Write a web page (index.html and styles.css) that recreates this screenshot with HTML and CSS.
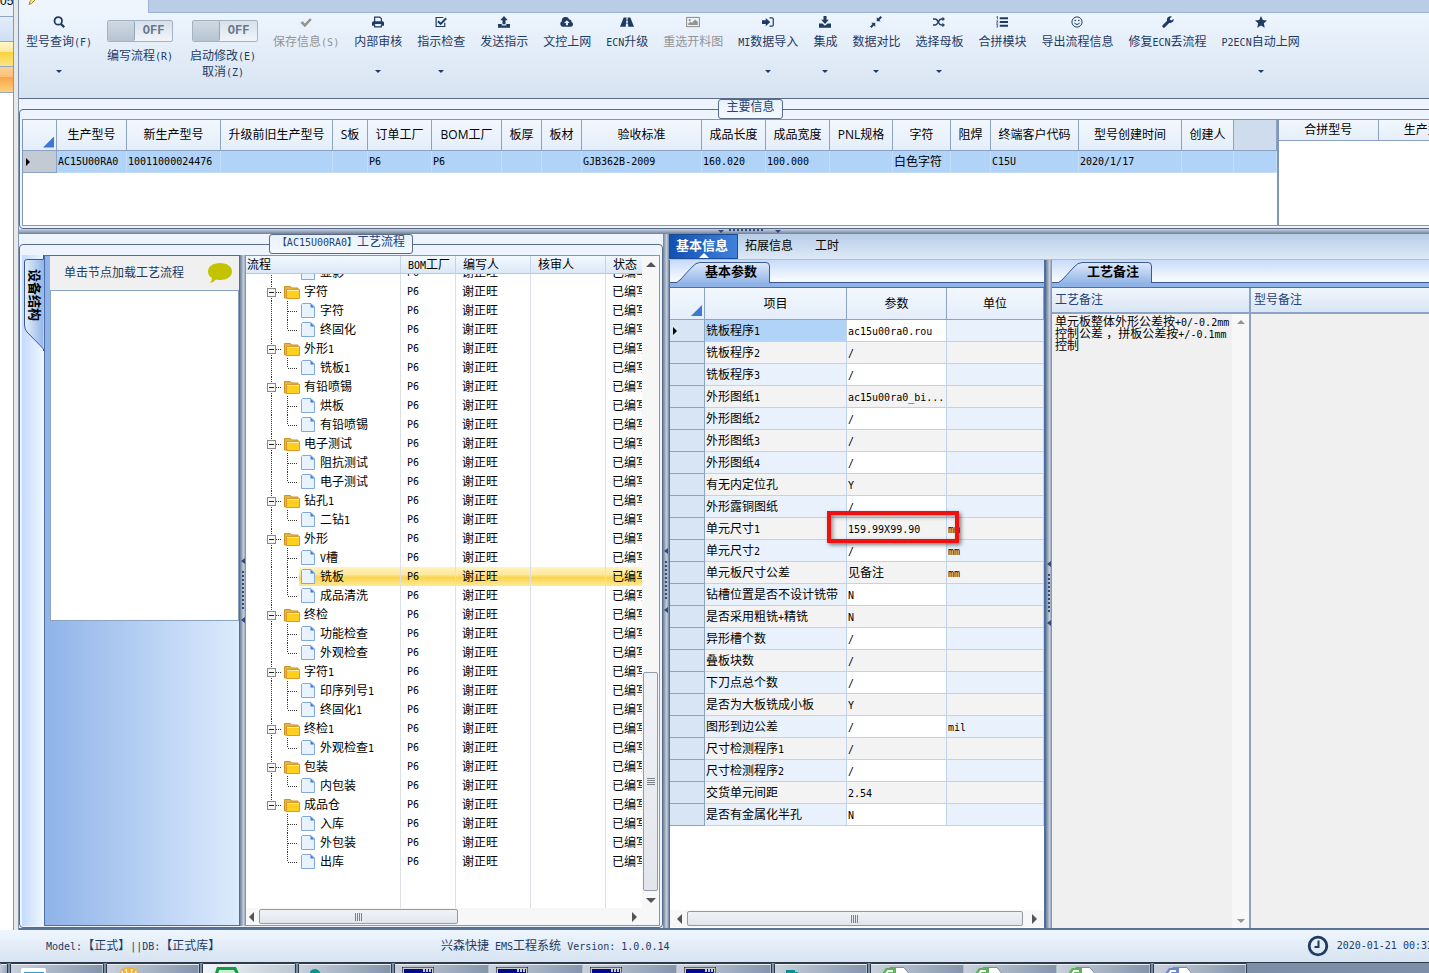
FILE: index.html
```html
<!DOCTYPE html>
<html lang="zh-CN">
<head>
    <meta charset="UTF-8">
    <meta name="viewport" content="width=device-width, initial-scale=1.0">
    <link rel="stylesheet" href="styles.css">
    <title>EMS工程系统</title>
</head>
<body>

<div class="workspace">
    <div class="side-strip">
        <div class="side-top">05</div>
        <div class="side-head"></div>
        <div class="side-yellow"></div>
        <div class="side-orange"></div>
        <div class="side-body"></div>
    </div>
    <div class="side-splitter"></div>

    <div class="app">
        <div class="doc-tabs">
            <div class="doc-tab">
                <svg width="8" height="5" viewBox="0 0 8 5"><path d="M1 4.500L2 1.500L4 -1L7 0L3.500 3.500Z" fill="#ffe680" stroke="#a8812c" stroke-width="1"/></svg>
            </div>
        </div>

        <div class="ribbon">
            <button class="tool has-menu">
                <svg viewBox="0 0 16 16"><circle cx="7" cy="6.500" r="5" fill="none" stroke="currentColor" stroke-width="2.400"/><path d="M10.500 10.500L15 15" stroke="currentColor" stroke-width="3"/></svg>
                <span>型号查询<span class="en">(F)</span></span>
            </button>
            <div class="toggle">
                <label class="switch"><input type="checkbox" id="editFlow"><span>OFF</span></label>
                <label for="editFlow">编写流程<span class="en">(R)</span></label>
            </div>
            <div class="toggle wide">
                <label class="switch"><input type="checkbox" id="startEdit"><span>OFF</span></label>
                <label for="startEdit">启动修改<span class="en">(E)</span></label>
                <button>取消<span class="en">(Z)</span></button>
            </div>
            <button class="tool" disabled>
                <svg viewBox="0 0 16 16"><path d="M2 8L6.500 12.500L14.500 4" fill="none" stroke="currentColor" stroke-width="3.400"/></svg>
                <span>保存信息<span class="en">(S)</span></span>
            </button>
            <button class="tool has-menu">
                <svg viewBox="0 0 16 16"><path d="M3.500 8V1.500H10.500L12.500 3.500V8" fill="none" stroke="currentColor" stroke-width="1.600"/><path d="M0 9Q0 7 2 7H14Q16 7 16 9V13H13V10.500H3V13H0Z" fill="currentColor"/><path d="M3.500 11V14.500H12.500V11" fill="none" stroke="currentColor" stroke-width="1.600"/></svg>
                <span>内部审核</span>
            </button>
            <button class="tool has-menu">
                <svg viewBox="0 0 16 16"><path d="M13 9V14H1.500V2H11" fill="none" stroke="currentColor" stroke-width="1.600"/><path d="M4 7L7.500 10.500L15 3" fill="none" stroke="currentColor" stroke-width="2.600"/></svg>
                <span>指示检查</span>
            </button>
            <button class="tool">
                <svg viewBox="0 0 16 16"><path d="M8 0L13 5.500H10V11H6V5.500H3ZM0 10.500H5V12.500H11V10.500H16V15.500H0Z" fill="currentColor"/></svg>
                <span>发送指示</span>
            </button>
            <button class="tool">
                <svg class="wide-icon" viewBox="0 0 19 16"><path d="M4 14.500A4 4 0 0 1 2.500 7A5.200 5.200 0 0 1 12.500 4.500A3 3 0 0 1 15.500 8A3.400 3.400 0 0 1 15 14.500ZM9.300 5.500L5.500 9.300H8V12.500H10.800V9.300H13.200Z" fill="currentColor" fill-rule="evenodd"/></svg>
                <span>文控上网</span>
            </button>
            <button class="tool">
                <svg class="wide-icon" viewBox="0 0 19 16"><path d="M5 2H8.800L8.500 5H10.500L10.200 2H14L19 14.500H11.200L10.900 10H8.100L7.800 14.500H0ZM8.500 6L8.200 9H10.800L10.500 6Z" fill="currentColor" fill-rule="evenodd"/></svg>
                <span><span class="en">ECN</span>升级</span>
            </button>
            <button class="tool" disabled>
                <svg class="wide-icon" viewBox="0 0 19 16"><rect x="0.800" y="1.800" width="17.400" height="12.400" fill="none" stroke="currentColor" stroke-width="1.500"/><circle cx="5" cy="5.500" r="1.500" fill="currentColor"/><path d="M3 12V10L6 7.500L8 9L12.500 4.500L16 8V12Z" fill="currentColor"/></svg>
                <span>重选开料图</span>
            </button>
            <button class="tool has-menu">
                <svg viewBox="0 0 16 16"><path d="M0 5.500H5V2.500L11 8L5 13.500V10.500H0Z" fill="currentColor"/><path d="M10 2.500H13.500Q15 2.500 15 4V12Q15 13.500 13.500 13.500H10" fill="none" stroke="currentColor" stroke-width="1.600"/></svg>
                <span><span class="en">MI</span>数据导入</span>
            </button>
            <button class="tool has-menu">
                <svg viewBox="0 0 16 16"><path d="M6 0H10V5H13L8 10.500L3 5H6ZM0 10H4.500L8 13L11.500 10H16V15.500H0Z" fill="currentColor"/></svg>
                <span>集成</span>
            </button>
            <button class="tool has-menu">
                <svg viewBox="0 0 16 16"><path d="M9 1.500V7H14.500L12.500 5.300L16 2L14 0L10.800 3.400ZM7 14.500V9H1.500L3.500 10.700L0 14L2 16L5.200 12.600Z" fill="currentColor"/></svg>
                <span>数据对比</span>
            </button>
            <button class="tool has-menu">
                <svg viewBox="0 0 16 16"><path d="M0 4H3C7 4 7 12 11 12H13M0 12H3C7 12 7 4 11 4H13" fill="none" stroke="currentColor" stroke-width="2"/><path d="M12.500 1L16 4L12.500 7ZM12.500 9L16 12L12.500 15Z" fill="currentColor"/></svg>
                <span>选择母板</span>
            </button>
            <button class="tool">
                <svg viewBox="0 0 16 16"><path d="M5 3H16M5 8H16M5 13H16" stroke="currentColor" stroke-width="2.400"/><path d="M0.500 1.500L2 0.500V4.500M0.500 6.500H2.500L0.700 9.500H3M0.500 11.500H2.500L1.500 13L2.500 14.500L0.500 15" fill="none" stroke="currentColor" stroke-width="1"/></svg>
                <span>合拼模块</span>
            </button>
            <button class="tool">
                <svg viewBox="0 0 16 16"><circle cx="8" cy="8" r="6.800" fill="none" stroke="currentColor" stroke-width="1.300"/><circle cx="5.600" cy="6" r="1.100" fill="currentColor"/><circle cx="10.400" cy="6" r="1.100" fill="currentColor"/><path d="M4.500 9.500Q8 13.500 11.500 9.500" fill="none" stroke="currentColor" stroke-width="1.300"/></svg>
                <span>导出流程信息</span>
            </button>
            <button class="tool">
                <svg viewBox="0 0 16 16"><path d="M2.500 13.500L9.500 6.500" stroke="currentColor" stroke-width="4" stroke-linecap="round"/><path d="M15.500 4L12.500 6L10.500 5V3L13.500 1A4.500 4.500 0 1 0 15.500 4Z" fill="currentColor"/></svg>
                <span>修复<span class="en">ECN</span>丢流程</span>
            </button>
            <button class="tool has-menu">
                <svg viewBox="0 0 16 16"><path d="M8 0L10.400 5.300L16 6L11.800 9.800L13 15.500L8 12.700L3 15.500L4.200 9.800L0 6L5.600 5.300Z" fill="currentColor"/></svg>
                <span><span class="en">P2ECN</span>自动上网</span>
            </button>
        </div>

        <fieldset class="group main-group">
            <legend>主要信息</legend>
            <div class="main-grids">
                <div class="main-left">
                    <table class="grid main-table">
                        <colgroup>
                            <col style="width: 34px"><col style="width: 70px"><col style="width: 94px"><col style="width: 112px"><col style="width: 35px"><col style="width: 64px"><col style="width: 70px"><col style="width: 40px"><col style="width: 40px"><col style="width: 120px"><col style="width: 64px"><col style="width: 64px"><col style="width: 63px"><col style="width: 58px"><col style="width: 40px"><col style="width: 88px"><col style="width: 103px"><col style="width: 52px"><col>
                        </colgroup>
                        <thead>
                            <tr>
                                <th class="corner"></th><th>生产型号</th><th>新生产型号</th><th>升级前旧生产型号</th><th>S板</th><th>订单工厂</th><th>BOM工厂</th><th>板厚</th><th>板材</th><th>验收标准</th><th>成品长度</th><th>成品宽度</th><th>PNL规格</th><th>字符</th><th>阻焊</th><th>终端客户代码</th><th>型号创建时间</th><th>创建人</th><th class="rest"></th>
                            </tr>
                        </thead>
                        <tbody>
                            <tr>
                                <td class="row-head current"></td><td class="en">AC15U00RA0</td><td class="en">10011000024476</td><td></td><td></td><td class="en">P6</td><td class="en">P6</td><td></td><td></td><td class="en">GJB362B-2009</td><td class="en">160.020</td><td class="en">100.000</td><td></td><td>白色字符</td><td></td><td class="en">C15U</td><td class="en">2020/1/17</td><td></td><td></td>
                            </tr>
                        </tbody>
                    </table>
                </div>
                <div class="main-right">
                    <table class="grid merge-table">
                        <thead><tr><th>合拼型号</th><th>生产型号</th></tr></thead>
                    </table>
                </div>
            </div>
        </fieldset>

        <div class="splitter-h">
            <svg width="60" height="5" viewBox="0 0 60 5"><path d="M0 1H6L3 4ZM57 1H63L60 4Z" fill="#2f4a7d"/><path d="M11 1H47" stroke="#2f4a7d" stroke-width="2" stroke-dasharray="2 2"/></svg>
        </div>

        <div class="lower">
            <fieldset class="group flow-group">
                <legend><span class="en">【AC15U00RA0】</span>工艺流程</legend>
                <div class="flow-area">
                    <div class="side-tabs">
                        <svg width="22" height="96" viewBox="0 0 22 96">
                            <defs><linearGradient id="tabFill"><stop offset="0" stop-color="#e6f0fd"/><stop offset="1" stop-color="#91b5e8"/></linearGradient></defs>
                            <path d="M22 4.500H5Q2.500 4.500 2.500 7V70Q2.500 74 5 77L21.500 94Z" fill="url(#tabFill)"/>
                            <path d="M21.500 0V4.500H5Q2.500 4.500 2.500 7V70Q2.500 74 5 77L21.500 94V96" fill="none" stroke="#3a5a94"/>
                        </svg>
                        <span>设备结构</span>
                    </div>
                    <div class="device-pane">
                        <div class="device-head">
                            <span>单击节点加载工艺流程</span>
                            <svg width="26" height="22" viewBox="0 0 26 22"><path d="M13 1C20 1 25 4.500 25 9.500S20 18 13 18Q11 18 9 17.500Q6 21 3 21Q5 18.500 5 16Q1 13.500 1 9.500C1 4.500 6 1 13 1Z" fill="#c3c300"/></svg>
                        </div>
                        <div class="device-tree"></div>
                    </div>
                    <div class="splitter-v">
                        <svg width="6" height="68" viewBox="0 0 6 68"><path d="M5 1V7L1 4ZM5 60V66L1 63Z" fill="#2f4a7d"/><path d="M3 14V52" stroke="#2f4a7d" stroke-width="2" stroke-dasharray="2 2"/></svg>
                    </div>
                    <div class="flow-list">
                        <div class="flow-columns">
                            <div class="flow-scroll">
                                <table class="flow-table flow-header">
                                    <colgroup><col style="width: 155px"><col style="width: 55px"><col style="width: 75px"><col style="width: 75px"><col></colgroup>
                                    <thead><tr><th>流程</th><th><span class="en">BOM</span>工厂</th><th>编写人</th><th>核审人</th><th>状态</th></tr></thead>
                                </table>
                                <div class="flow-body">
                                    <table class="flow-table">
                                        <colgroup><col style="width: 155px"><col style="width: 55px"><col style="width: 75px"><col style="width: 75px"><col></colgroup>
                                        <tbody id="flowRows"></tbody>
                                    </table>
                                </div>
                            </div>
                            <div class="scroll-v">
                                <span class="arrow up"></span>
                                <span class="thumb"></span>
                                <span class="arrow down"></span>
                            </div>
                        </div>
                        <div class="scroll-h">
                            <span class="arrow left"></span>
                            <span class="thumb"></span>
                            <span class="arrow right"></span>
                        </div>
                    </div>
                </div>
            </fieldset>

            <div class="splitter-v outer">
                <svg width="6" height="68" viewBox="0 0 6 68"><path d="M5 1V7L1 4ZM5 60V66L1 63Z" fill="#2f4a7d"/><path d="M3 14V52" stroke="#2f4a7d" stroke-width="2" stroke-dasharray="2 2"/></svg>
            </div>

            <div class="detail">
                <div class="detail-tabs">
                    <button class="active">基本信息</button>
                    <button>拓展信息</button>
                    <button>工时</button>
                </div>
                <div class="detail-body">
                    <div class="params">
                        <div class="page-tabs">
                            <svg width="104" height="21" viewBox="0 0 104 21">
                                <defs><linearGradient id="pageFill" x2="0" y2="1"><stop offset="0" stop-color="#dfeafa"/><stop offset="1" stop-color="#8fb3e6"/></linearGradient></defs>
                                <path d="M0 22Q5 21 8 18L20 5Q24 0.500 28 0.500H94Q97.500 0.500 97.500 4V22Z" fill="url(#pageFill)" stroke="#3a5a94"/>
                            </svg>
                            <span>基本参数</span>
                        </div>
                        <div class="params-scroll">
                            <table class="grid params-table">
                                <colgroup><col style="width: 35px"><col style="width: 142px"><col style="width: 100px"><col></colgroup>
                                <thead><tr><th class="corner"></th><th>项目</th><th>参数</th><th>单位</th></tr></thead>
                                <tbody id="paramRows"></tbody>
                            </table>
                        </div>
                        <div class="scroll-h">
                            <span class="arrow left"></span>
                            <span class="thumb"></span>
                            <span class="arrow right"></span>
                        </div>
                    </div>
                    <div class="splitter-v inner">
                        <svg width="6" height="68" viewBox="0 0 6 68"><path d="M5 1V7L1 4ZM5 60V66L1 63Z" fill="#2f4a7d"/><path d="M3 14V52" stroke="#2f4a7d" stroke-width="2" stroke-dasharray="2 2"/></svg>
                    </div>
                    <div class="remarks">
                        <div class="page-tabs">
                            <svg width="104" height="21" viewBox="0 0 104 21">
                                <path d="M0 22Q5 21 8 18L20 5Q24 0.500 28 0.500H94Q97.500 0.500 97.500 4V22Z" fill="url(#pageFill)" stroke="#3a5a94"/>
                            </svg>
                            <span>工艺备注</span>
                        </div>
                        <div class="remark-cols">
                            <div class="remark first">
                                <label for="processRemark">工艺备注</label>
                                <div class="remark-text">
                                    <div class="remark-input" id="processRemark" role="textbox" contenteditable="true">单元板整体外形公差按<span class="en">+0/-0.2mm</span><br>控制公差 ，拼板公差按<span class="en">+/-0.1mm</span><br>控制</div>
                                    <div class="scroll-v faint">
                                        <span class="arrow up"></span>
                                        <span class="arrow down"></span>
                                    </div>
                                </div>
                            </div>
                            <div class="remark">
                                <label for="modelRemark">型号备注</label>
                                <textarea id="modelRemark"></textarea>
                            </div>
                        </div>
                    </div>
                </div>
            </div>
        </div>
    </div>
</div>

<div class="status">
    <span class="status-model"><span class="en">Model:</span>【正式】<span class="en">||DB:</span>【正式库】</span>
    <span class="status-version">兴森快捷<span class="en"> EMS</span>工程系统<span class="en"> Version: 1.0.0.14</span></span>
    <span class="status-time">
        <svg width="22" height="22" viewBox="0 0 22 22"><circle cx="11" cy="11" r="8.800" fill="none" stroke="#1f3a63" stroke-width="2.800"/><path d="M11.500 5.500V12H7.500" fill="none" stroke="#1f3a63" stroke-width="2"/></svg>
        <span class="en">2020-01-21 00:33</span>
    </span>
</div>

<div class="taskbar">
    <div class="task-group edge"><button></button></div>
    <div class="task-group"><button><svg width="26" height="8" viewBox="0 0 26 8"><path d="M0 8V3Q0 1 2 1H23Q25 1 25 3V8Z" fill="#fff"/><path d="M3 5H23V8H3Z" fill="#2b9ad6"/></svg></button></div>
    <div class="task-group"><button><svg width="26" height="8" viewBox="0 0 26 8"><path d="M2 8A10 8 0 0 1 22 8Z" fill="#f0b23c"/><path d="M6 8L5 4M10 8L9 2M14 8L15 2M18 8L19 4" stroke="#fff2c4" stroke-width="1.500"/></svg></button></div>
    <div class="task-group light"><button><svg width="26" height="8" viewBox="0 0 26 8"><path d="M3 8L5 1.500H22L25 8" fill="#c9efd4" stroke="#129a44" stroke-width="3"/></svg></button></div>
    <div class="task-group"><button><svg width="26" height="8" viewBox="0 0 26 8"><path d="M1 8V5Q2 2 7 2Q11 3 12 8Z" fill="#08918f"/></svg></button></div>
    <div class="task-group console">
        <button><svg width="32" height="8" viewBox="0 0 32 8"><path d="M0 0H32V8H0Z" fill="#c9c9c9" stroke="#000"/><path d="M2 2H30V8H2Z" fill="#000b8c"/><path d="M22 2V5M25 2V5M28 2V5" stroke="#c9c9c9" stroke-width="2"/></svg></button>
        <button><svg width="32" height="8" viewBox="0 0 32 8"><path d="M0 0H32V8H0Z" fill="#c9c9c9" stroke="#000"/><path d="M2 2H30V8H2Z" fill="#000b8c"/><path d="M22 2V5M25 2V5M28 2V5" stroke="#c9c9c9" stroke-width="2"/></svg></button>
        <button><svg width="32" height="8" viewBox="0 0 32 8"><path d="M0 0H32V8H0Z" fill="#c9c9c9" stroke="#000"/><path d="M2 2H30V8H2Z" fill="#000b8c"/><path d="M22 2V5M25 2V5M28 2V5" stroke="#c9c9c9" stroke-width="2"/></svg></button>
        <button><svg width="32" height="8" viewBox="0 0 32 8"><path d="M0 0H32V8H0Z" fill="#c9c9c9" stroke="#000"/><path d="M2 2H30V8H2Z" fill="#000b8c"/><path d="M22 2V5M25 2V5M28 2V5" stroke="#c9c9c9" stroke-width="2"/></svg></button>
    </div>
    <div class="task-group"><button><svg width="26" height="8" viewBox="0 0 26 8"><path d="M1 8V3H10V5H13V8Z" fill="#08918f"/></svg></button></div>
    <div class="task-group sheets">
        <button><svg width="30" height="8" viewBox="0 0 30 8"><path d="M9 8V0.500H23L29 8Z" fill="#fff" stroke="#7d8ea5"/><path d="M0 8L5 1H15V8Z" fill="#5fb15a"/><path d="M5 7L7 4H12" stroke="#fff" stroke-width="2" fill="none"/></svg></button>
        <button><svg width="30" height="8" viewBox="0 0 30 8"><path d="M9 8V0.500H23L29 8Z" fill="#fff" stroke="#7d8ea5"/><path d="M0 8L5 1H15V8Z" fill="#5fb15a"/><path d="M5 7L7 4H12" stroke="#fff" stroke-width="2" fill="none"/></svg></button>
        <button><svg width="30" height="8" viewBox="0 0 30 8"><path d="M9 8V0.500H23L29 8Z" fill="#fff" stroke="#7d8ea5"/><path d="M0 8L5 1H15V8Z" fill="#5fb15a"/><path d="M5 7L7 4H12" stroke="#fff" stroke-width="2" fill="none"/></svg></button>
    </div>
    <div class="task-group"><button><svg width="30" height="8" viewBox="0 0 30 8"><path d="M9 8V0.500H23L29 8Z" fill="#fff" stroke="#7d8ea5"/><path d="M0 8L5 1H15V8Z" fill="#6f86d0"/><path d="M5 7L7 4H12" stroke="#fff" stroke-width="2" fill="none"/></svg></button></div>
</div>

<script src="script.js"></script>
</body>
</html>
```

FILE: styles.css
```css
* {
    box-sizing: border-box;
}

body {
    margin: 0;
    height: 100vh;
    display: flex;
    flex-direction: column;
    overflow: hidden;
    font-family: "Liberation Sans", "Noto Sans CJK SC", sans-serif;
    font-size: 12px;
    line-height: 16px;
    color: #000;
    background: #dce8f5;
    white-space: nowrap;
}

button, textarea {
    font: inherit;
    color: inherit;
    background: none;
    border: 0;
    padding: 0;
    margin: 0;
    outline: none;
}

svg {
    display: block;
    flex: none;
}

table {
    border-spacing: 0;
    table-layout: fixed;
    width: 100%;
}

/* half-width text */
.en {
    font-family: "DejaVu Sans Mono", "Noto Sans CJK SC", monospace;
    font-size: 10px;
    line-height: 1;
    white-space: pre;
}

.workspace {
    flex: 1;
    min-height: 0;
    display: flex;
}

/* left strip */
.side-strip {
    width: 14px;
    flex: none;
    display: flex;
    flex-direction: column;
    border-right: 1px solid #7f9abf;
    background: #fff;
    overflow: hidden;
}

.side-top {
    height: 17px;
    line-height: 2px;
    background: #e9f1fb;
    border-bottom: 1px solid #8fa6c6;
}

.side-head {
    height: 25px;
    background: linear-gradient(#e2edf9, #cfdff2);
    border-bottom: 1px solid #8fa6c6;
}

.side-yellow {
    height: 25px;
    background: linear-gradient(#fff5c9, #fde9a0 40%, #fbd13e 41%, #fde681);
    border-bottom: 1px solid #8fa6c6;
}

.side-orange {
    height: 26px;
    background: linear-gradient(#fccf94, #fbc078 40%, #faa448 41%, #fdd27c);
    border-bottom: 1px solid #8fa6c6;
}

.side-body {
    flex: 1;
}

.side-splitter {
    width: 5px;
    flex: none;
    background: #e8e8e8;
    border-right: 1px solid #7f93b0;
}

.app {
    flex: 1;
    min-width: 0;
    display: flex;
    flex-direction: column;
    background: #edf4fd;
}

.doc-tabs {
    height: 13px;
    flex: none;
    background: #bacde6;
    border-bottom: 1px solid #9db3d2;
}

.doc-tab {
    width: 130px;
    height: 13px;
    padding-left: 9px;
    background: #eef5fd;
    border-right: 1px solid #9db3d2;
}

/* ribbon */
.ribbon {
    height: 86px;
    flex: none;
    display: flex;
    align-items: flex-start;
    gap: 15px;
    padding: 3px 7px 0;
    color: #1f3a63;
    background: linear-gradient(#edf5fe, #d7e3f1);
    border-bottom: 1px solid #596b88;
}

.tool {
    flex: none;
    display: flex;
    flex-direction: column;
    align-items: center;
    gap: 6px;
}

.tool svg {
    width: 12px;
    height: 12px;
}

.tool svg.wide-icon {
    width: 14px;
}

.tool:disabled {
    color: #949494;
}

.tool.has-menu::after {
    content: "";
    margin-top: 14px;
    border: 3px solid transparent;
    border-top-color: #1f3a63;
    border-bottom: 0;
}

.toggle {
    width: 66px;
    flex: none;
    padding-top: 4px;
    display: flex;
    flex-direction: column;
    align-items: center;
}

.toggle.wide {
    width: 70px;
}

.switch {
    width: 66px;
    height: 22px;
    margin-bottom: 6px;
    display: flex;
    border: 1px solid #a3b3c6;
    border-radius: 2px;
    background: linear-gradient(#d7e0e9, #f1f5fa);
}

.toggle.wide .switch {
    align-self: flex-end;
}

.switch input {
    appearance: none;
    width: 27px;
    height: 20px;
    margin: 0;
    background: linear-gradient(#cfd9e3, #b6c3d0);
    border-right: 1px solid #94a6ba;
    border-radius: 2px;
}

.switch span {
    flex: 1;
    text-align: center;
    font-family: "Liberation Mono", monospace;
    font-size: 12px;
    font-weight: bold;
    line-height: 20px;
    color: #66778d;
}

/* groups */
.group {
    min-width: 0;
    margin: 0;
    padding: 0;
    border: 1px solid #596b88;
    border-radius: 4px;
}

.group legend {
    height: 20px;
    margin: 0 auto;
    padding: 0 7px;
    line-height: 14px;
    color: #24427a;
    background: linear-gradient(#e7f0fb, #f5f9fe);
    border: 1px solid #596b88;
    border-radius: 3px;
}

.main-group {
    height: 130px;
    flex: none;
    margin-right: -53px;
}

.main-grids {
    height: 107px;
    margin: 0 2px 1px;
    display: flex;
    border: 1px solid #8297b5;
    background: #fff;
}

.main-left {
    width: 1256px;
    flex: none;
    border-right: 2px solid #8297b5;
}

.main-right {
    flex: 1;
}

/* grids */
.grid th {
    padding: 0;
    height: 31px;
    font-weight: normal;
    font-family: "Open Sans", "Noto Sans CJK SC", sans-serif;
    background: linear-gradient(#f2f7fd, #e4eefa);
    border-right: 1px solid #8ba3c4;
    border-bottom: 1px solid #8ba3c4;
}

.grid td {
    padding: 0 1px;
    height: 22px;
    line-height: 16px;
    background: #b0d3f7;
    border-right: 1px solid #c3dcf8;
    border-bottom: 1px solid #c3dcf8;
}

.grid .corner::after {
    content: "";
    display: block;
    margin: 14px 2px 0 auto;
    width: 11px;
    height: 11px;
    background: #3f78d2;
    clip-path: polygon(100% 0, 100% 100%, 0 100%);
}

.grid .rest {
    background: #cfdced;
}

.grid .row-head {
    padding: 0 3px;
    background: #c3cad3;
    border-color: #8ba3c4;
}

.grid .current::after {
    content: "";
    display: block;
    width: 0;
    border: 4px solid transparent;
    border-left-color: #000;
    border-right: 0;
}

.merge-table th {
    height: 21px;
}

/* splitters */
.splitter-h {
    height: 5px;
    flex: none;
    padding-left: 699px;
    background: linear-gradient(#c8d2de, #6f8196);
}

.splitter-h svg {
    overflow: visible;
}

.splitter-v {
    width: 6px;
    flex: none;
    display: flex;
    align-items: center;
    background: linear-gradient(90deg, #6f8196, #c3cfde 60%, #7488a0);
}

.lower {
    flex: 1;
    min-height: 0;
    display: flex;
    border-bottom: 2px solid #5a7598;
}

.flow-group {
    width: 644px;
    flex: none;
    height: 100%;
}

.flow-area {
    height: 100%;
    padding: 1px 2px 1px;
    display: flex;
}

.side-tabs {
    width: 22px;
    flex: none;
    position: relative;
    background: linear-gradient(90deg, #c3dbfd, #f0f7ff);
}

.side-tabs span {
    position: absolute;
    top: 14px;
    left: 4px;
    writing-mode: vertical-rl;
    text-orientation: sideways;
    font-size: 13px;
    font-weight: bold;
}

.device-pane {
    width: 196px;
    flex: none;
    display: flex;
    flex-direction: column;
    border: 1px solid #4b6ea8;
    background: linear-gradient(90deg, #8fb3e8, #dcebfd);
}

.device-head {
    height: 34px;
    margin-left: 5px;
    padding: 0 6px 0 14px;
    display: flex;
    align-items: center;
    justify-content: space-between;
    color: #1f3a63;
    background: #f0f0f0;
}

.device-tree {
    height: 331px;
    margin-left: 5px;
    background: #fff;
    border: 1px solid #8ba3c4;
}

/* process list */
.flow-list {
    flex: 1;
    min-width: 0;
    display: flex;
    flex-direction: column;
    background: #fff;
    border: 1px solid #8297b5;
    border-left: 0;
}

.flow-columns {
    flex: 1;
    min-height: 0;
    display: flex;
}

.flow-scroll {
    flex: 1;
    min-width: 0;
    display: flex;
    flex-direction: column;
    overflow: hidden;
}

.flow-header th {
    height: 18px;
    padding: 0 0 0 7px;
    text-align: left;
    font-weight: normal;
    line-height: 16px;
    background: linear-gradient(#f3f8fe, #dbe8f7);
    border-right: 1px solid #c3d2e6;
    border-bottom: 1px solid #b5c9e3;
}

.flow-header th:first-child {
    padding-left: 1px;
}

.flow-body {
    flex: 1;
    min-height: 0;
    overflow: hidden;
}

/* list is scrolled part of a row down */
.flow-body table {
    margin-top: -11px;
}

.flow-body td {
    height: 19px;
    padding: 0 0 0 6px;
    line-height: 16px;
    border-right: 1px solid #dcdfe3;
    overflow: hidden;
}

.flow-body td:first-child {
    padding: 0;
}

.flow-body td:last-child, .flow-header th:last-child {
    border-right: 0;
}

.flow-body .node {
    display: flex;
    align-items: center;
    height: 19px;
    padding-left: 18px;
}

.flow-body .selected td {
    background: linear-gradient(#fff3c0, #fde79a 40%, #fbd54c 55%, #fee99a);
}

.flow-body .selected td:first-child {
    background-size: calc(100% - 53px) 100%;
    background-position: right;
    background-repeat: no-repeat;
}

.flow-body .filler td {
    height: 60px;
}

/* scrollbars */
.scroll-v {
    width: 17px;
    flex: none;
    display: flex;
    flex-direction: column;
    align-items: center;
    justify-content: space-between;
    padding: 6px 0 5px;
    background: #f7f7f7;
}

.scroll-v .thumb {
    width: 15px;
    height: 219px;
    margin-top: auto;
    margin-bottom: 7px;
}

.scroll-h {
    height: 17px;
    flex: none;
    display: flex;
    align-items: center;
    padding: 0 22px 0 3px;
    background: #f7f7f7;
}

.scroll-h .thumb {
    width: 199px;
    height: 15px;
    margin: 0 auto 0 5px;
}

.thumb {
    display: flex;
    align-items: center;
    justify-content: center;
    border: 1px solid #949aa3;
    border-radius: 2px;
    background: linear-gradient(#f0f2f6, #e2e6ec);
}

.thumb::after {
    content: "";
    width: 8px;
    height: 8px;
    background: repeating-linear-gradient(90deg, #7b828c 0 1px, transparent 1px 2px);
}

.scroll-v .thumb::after {
    background: repeating-linear-gradient(#7b828c 0 1px, transparent 1px 2px);
}

.arrow {
    border: 5px solid transparent;
}

.arrow.up {
    border-bottom-color: #50555c;
    border-top: 0;
}

.arrow.down {
    border-top-color: #50555c;
    border-bottom: 0;
}

.arrow.left {
    border-right-color: #50555c;
    border-left: 0;
}

.arrow.right {
    border-left-color: #50555c;
    border-right: 0;
}

.faint .arrow {
    border-width: 4px;
    opacity: 0.6;
}

.faint .arrow.up {
    border-top: 0;
}

.faint .arrow.down {
    border-bottom: 0;
}

/* right side */
.detail {
    flex: 1;
    min-width: 0;
    display: flex;
    flex-direction: column;
}

.detail-tabs {
    height: 26px;
    flex: none;
    display: flex;
    background: linear-gradient(#b8cde8, #dde9f6);
    border-bottom: 1px solid #a9bdd8;
}

.detail-tabs button {
    padding: 0 15px 2px 7px;
    position: relative;
}

.detail-tabs .active {
    padding: 0 9px 2px 6px;
    font-size: 13px;
    font-weight: bold;
    color: #fff;
    background: linear-gradient(90deg, #1350b0, #3f82da);
    border: 1px solid #1a4c9c;
}

.detail-tabs .active::after {
    content: "";
    position: absolute;
    bottom: 0;
    left: 50%;
    margin-left: -5px;
    border: 5px solid transparent;
    border-bottom-color: #fff;
    border-top: 0;
}

.detail-body {
    flex: 1;
    min-height: 0;
    display: flex;
}

.params {
    width: 377px;
    flex: none;
    display: flex;
    flex-direction: column;
    border-left: 1px solid #4b6ea8;
    border-right: 2px solid #4b6ea8;
    background: #fff;
}

.page-tabs {
    height: 27px;
    flex: none;
    display: flex;
    align-items: flex-start;
    padding: 2px 0 0 2px;
    position: relative;
    background: linear-gradient(#c8dbf8, #fafdff 22px, #3a5a94 22px, #3a5a94 23px, #8fb3e6 23px);
}

.page-tabs span {
    position: absolute;
    top: 4px;
    left: 35px;
    font-size: 13px;
    font-weight: bold;
}

.params-scroll {
    flex: 1;
    min-height: 0;
    overflow: hidden;
    border-top: 1px solid #4b6ea8;
}

.params-table th {
    height: 32px;
}

.params-table td {
    background: #e9f2fc;
    border-color: #bfd3ee;
    position: relative;
}

.params-table td:nth-child(3) {
    background: #fff;
}

.params-table tr:nth-child(even) td {
    background: #f3f3f3;
}

.params-table tr:first-child td:nth-child(2) {
    background: #b0d3f7;
}

.params-table tr .row-head, .params-table tr:nth-child(even) .row-head {
    background: #d8e5f4;
    border-color: #8ba3c4;
}

.mark {
    position: absolute;
    top: -7px;
    left: -20px;
    width: 132px;
    height: 32px;
    border: 4px solid #ee1111;
    box-shadow: 2px 2px 4px rgba(0, 0, 0, 0.5), inset 2px 2px 4px rgba(0, 0, 0, 0.4);
    z-index: 1;
}

.params .scroll-h {
    padding: 0 7px 0 7px;
    margin-bottom: 1px;
}

.params .thumb {
    flex: 1;
    margin: 0 9px 0 5px;
}

.remarks {
    flex: 1;
    min-width: 0;
    display: flex;
    flex-direction: column;
}

.remark-cols {
    flex: 1;
    min-height: 0;
    display: flex;
    border-top: 1px solid #4b6ea8;
}

.remark {
    flex: 1;
    display: flex;
    flex-direction: column;
    background: #f0f0f0;
}

.remark.first {
    width: 199px;
    flex: none;
    border-right: 2px solid #8ba3c4;
}

.remark label {
    height: 26px;
    flex: none;
    padding: 4px 3px;
    color: #24427a;
    background: linear-gradient(#f0f6fd, #d9e5f4);
    border-bottom: 2px solid #8ba3c4;
}

.remark-text {
    flex: 1;
    min-height: 0;
    display: flex;
}

.remark-input {
    flex: 1;
    min-width: 0;
    padding: 2px 0 0 3px;
    line-height: 12px;
}

.remark textarea {
    flex: 1;
    resize: none;
}

/* bottom */
.status {
    height: 32px;
    flex: none;
    display: flex;
    align-items: center;
    padding-left: 46px;
    color: #1f3a63;
    background: linear-gradient(#eff6fe, #d7e3f1);
}

.status-model {
    width: 395px;
}

.status-time {
    display: flex;
    align-items: center;
    gap: 8px;
    margin-left: auto;
    margin-right: -4px;
}

.taskbar {
    height: 11px;
    flex: none;
    display: flex;
    gap: 2px;
    overflow: hidden;
    background: #7d8ea6;
    border-top: 1px solid #2c3a4a;
}

.task-group {
    display: flex;
    border: 1px solid #2c3a4a;
    border-bottom: 0;
    border-radius: 2px 2px 0 0;
}

.task-group button {
    width: 92px;
    padding: 2px 0 0 10px;
    background: linear-gradient(100deg, #c9d2dd, #8494ab);
    border-top: 1px solid #eef2f6;
    border-right: 1px solid #b4bfcc;
}

.task-group.edge {
    width: 8px;
    border-left: 0;
    overflow: hidden;
}

.task-group.light button {
    background: linear-gradient(100deg, #f4f7f9, #bcc8d5);
}

.task-group.console button {
    width: 94px;
    padding-left: 7px;
}

.task-group.sheets button {
    width: 93px;
}
```

FILE: script.js
```javascript
const flows = [
    { name: null, steps: ['显影'] },
    { name: '字符', steps: ['字符', '终固化'] },
    { name: '外形1', steps: ['铣板1'] },
    { name: '有铅喷锡', steps: ['烘板', '有铅喷锡'] },
    { name: '电子测试', steps: ['阻抗测试', '电子测试'] },
    { name: '钻孔1', steps: ['二钻1'] },
    { name: '外形', steps: ['V槽', '铣板', '成品清洗'] },
    { name: '终检', steps: ['功能检查', '外观检查'] },
    { name: '字符1', steps: ['印序列号1', '终固化1'] },
    { name: '终检1', steps: ['外观检查1'] },
    { name: '包装', steps: ['内包装'] },
    { name: '成品仓', steps: ['入库', '外包装', '出库'] }
];

const params = [
    ['铣板程序1', 'ac15u00ra0.rou', ''],
    ['铣板程序2', '/', ''],
    ['铣板程序3', '/', ''],
    ['外形图纸1', 'ac15u00ra0_bi...', ''],
    ['外形图纸2', '/', ''],
    ['外形图纸3', '/', ''],
    ['外形图纸4', '/', ''],
    ['有无内定位孔', 'Y', ''],
    ['外形露铜图纸', '/', ''],
    ['单元尺寸1', '159.99X99.90', 'mm'],
    ['单元尺寸2', '/', 'mm'],
    ['单元板尺寸公差', '见备注', 'mm'],
    ['钻槽位置是否不设计铣带', 'N', ''],
    ['是否采用粗铣+精铣', 'N', ''],
    ['异形槽个数', '/', ''],
    ['叠板块数', '/', ''],
    ['下刀点总个数', '/', ''],
    ['是否为大板铣成小板', 'Y', ''],
    ['图形到边公差', '/', 'mil'],
    ['尺寸检测程序1', '/', ''],
    ['尺寸检测程序2', '/', ''],
    ['交货单元间距', '2.54', ''],
    ['是否有金属化半孔', 'N', '']
];

// half-width characters get their own font
function mix(text) {
    return text.replace(/[!-~]+/g, part => `<span class="en">${part}</span>`);
}

function dots(d) {
    return `<path d="${d}" stroke="#333" stroke-dasharray="1 1" fill="none"/>`;
}

function folderIcon(isLast) {
    return `<svg width="40" height="19" viewBox="0 0 40 19">
        ${dots(isLast ? 'M7.5 0V9' : 'M7.5 0V19')}${dots('M12 10.5H18')}
        <rect x="3.500" y="6.500" width="8" height="8" fill="#f6f6f6" stroke="#8a8a8a"/>
        <path d="M5 10.500H10" stroke="#222"/>
        <path d="M20.500 16V4.500H26L28 6H34V16Z" fill="#e3b64a" stroke="#c99422"/>
        <path d="M22.500 16.500V7.500H35.500V16.500Z" fill="#ffcf1f" stroke="#e0982a"/>
        <path d="M23 8.500H35" stroke="#fff0a0"/>
    </svg>`;
}

function fileIcon(trunk, isLast) {
    return `<svg width="56" height="19" viewBox="0 0 56 19">
        ${trunk ? dots('M7.5 0V19') : ''}
        ${dots(isLast ? 'M23.5 0V10' : 'M23.5 0V19')}${dots('M24 10.5H34')}
        <path d="M38.500 2.500H47L50.500 6V16.500H37.500V3.500Z" fill="#e9f3ff" stroke="#7fa9e0"/>
        <path d="M46.500 2.500L50.500 6.500H46.500Z" fill="#3d7fd9"/>
    </svg>`;
}

function flowRow(icon, name, selected) {
    return `<tr class="${selected ? 'selected' : ''}">
        <td><div class="node">${icon}<span>${mix(name)}</span></div></td>
        <td class="en">P6</td><td>谢正旺</td><td></td><td>已编写</td>
    </tr>`;
}

let flowHtml = '';
flows.forEach((flow, i) => {
    const lastFlow = i === flows.length - 1;
    if (flow.name) {
        flowHtml += flowRow(folderIcon(lastFlow), flow.name, false);
    }
    flow.steps.forEach((step, j) => {
        const icon = fileIcon(!lastFlow, j === flow.steps.length - 1);
        flowHtml += flowRow(icon, step, step === '铣板');
    });
});
flowHtml += '<tr class="filler"><td></td><td></td><td></td><td></td><td></td></tr>';
document.getElementById('flowRows').innerHTML = flowHtml;

document.getElementById('paramRows').innerHTML = params.map((row, i) => {
    const mark = row[0] === '单元尺寸1' ? '<div class="mark"></div>' : '';
    return `<tr>
        <td class="row-head ${i === 0 ? 'current' : ''}"></td>
        <td>${mix(row[0])}</td><td>${mix(row[1])}${mark}</td><td>${mix(row[2])}</td>
    </tr>`;
}).join('');
```
